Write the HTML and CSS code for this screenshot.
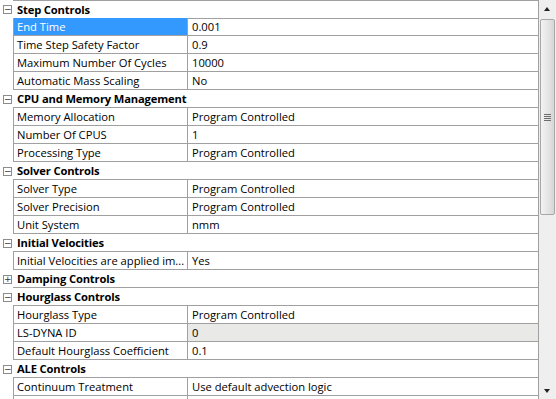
FILE: index.html
```html
<!DOCTYPE html>
<html>
<head>
<meta charset="utf-8">
<link rel="stylesheet" href="styles.css">
</head>
<body>
<div class="panel">
  <div class="grid">
    <div class="row cat"><span class="tog">&minus;</span><div class="ctext">Step Controls</div></div>
    <div class="row prop sel"><span class="gut"></span><div class="name">End Time</div><div class="val">0.001</div></div>
    <div class="row prop"><span class="gut"></span><div class="name">Time Step Safety Factor</div><div class="val">0.9</div></div>
    <div class="row prop"><span class="gut"></span><div class="name">Maximum Number Of Cycles</div><div class="val">10000</div></div>
    <div class="row prop"><span class="gut"></span><div class="name">Automatic Mass Scaling</div><div class="val">No</div></div>
    <div class="row cat"><span class="tog">&minus;</span><div class="ctext">CPU and Memory Management</div></div>
    <div class="row prop"><span class="gut"></span><div class="name">Memory Allocation</div><div class="val">Program Controlled</div></div>
    <div class="row prop"><span class="gut"></span><div class="name">Number Of CPUS</div><div class="val">1</div></div>
    <div class="row prop"><span class="gut"></span><div class="name">Processing Type</div><div class="val">Program Controlled</div></div>
    <div class="row cat"><span class="tog">&minus;</span><div class="ctext">Solver Controls</div></div>
    <div class="row prop"><span class="gut"></span><div class="name">Solver Type</div><div class="val">Program Controlled</div></div>
    <div class="row prop"><span class="gut"></span><div class="name">Solver Precision</div><div class="val">Program Controlled</div></div>
    <div class="row prop"><span class="gut"></span><div class="name">Unit System</div><div class="val">nmm</div></div>
    <div class="row cat"><span class="tog">&minus;</span><div class="ctext">Initial Velocities</div></div>
    <div class="row prop"><span class="gut"></span><div class="name">Initial Velocities are applied im...</div><div class="val">Yes</div></div>
    <div class="row cat"><span class="tog">+</span><div class="ctext">Damping Controls</div></div>
    <div class="row cat"><span class="tog">&minus;</span><div class="ctext">Hourglass Controls</div></div>
    <div class="row prop"><span class="gut"></span><div class="name">Hourglass Type</div><div class="val">Program Controlled</div></div>
    <div class="row prop"><span class="gut"></span><div class="name">LS-DYNA ID</div><div class="val ro">0</div></div>
    <div class="row prop"><span class="gut"></span><div class="name">Default Hourglass Coefficient</div><div class="val">0.1</div></div>
    <div class="row cat"><span class="tog">&minus;</span><div class="ctext">ALE Controls</div></div>
    <div class="row prop"><span class="gut"></span><div class="name">Continuum Treatment</div><div class="val">Use default advection logic</div></div>
    <div class="row prop"><span class="gut"></span><div class="name">&nbsp;</div><div class="val">&nbsp;</div></div>
  </div>
  <div class="sbar">
    <div class="arrow up"></div>
    <div class="track">
      <div class="thumb"><div class="grip"></div></div>
    </div>
    <div class="arrow down"></div>
  </div>
</div>
</body>
</html>
```
FILE: styles.css
```css
html, body {
  margin: 0;
  padding: 0;
  background: #ffffff;
}
body {
  width: 556px;
  height: 399px;
  overflow: hidden;
  font-family: "Open Sans", "Noto Sans", sans-serif;
  font-size: 11.2px;
  color: #000;
}
.panel {
  display: flex;
  width: 556px;
  height: 399px;
  overflow: hidden;
}
.grid {
  width: 539px;
  height: 399px;
  overflow: hidden;
}
.row {
  display: grid;
  grid-template-columns: 13px 174px 1fr;
  height: 18px;
}
.row:first-child .ctext {
  border-top: 1px solid #a0a0a0;
}
.gut {
  display: block;
}
.tog {
  width: 7px;
  height: 7px;
  border: 1px solid #8c8c8c;
  margin: 5px 0 0 3px;
  font-size: 9px;
  line-height: 7px;
  text-align: center;
  color: #333;
  font-family: "DejaVu Sans", sans-serif;
  overflow: hidden;
}
.ctext {
  grid-column: 2 / 4;
  font-weight: bold;
  letter-spacing: -0.15px;
  padding-left: 4px;
  line-height: 17px;
  border-bottom: 1px solid #a0a0a0;
  border-right: 1px solid #a0a0a0;
  white-space: nowrap;
  box-sizing: border-box;
}
.name, .val {
  border-left: 1px solid #a0a0a0;
  border-bottom: 1px solid #a0a0a0;
  line-height: 17px;
  white-space: nowrap;
  overflow: hidden;
}
.name {
  padding-left: 3px;
}
.val {
  padding-left: 4px;
  border-right: 1px solid #a0a0a0;
}
.sel .name {
  background: #3399ff;
  color: #fff;
}
.val.ro {
  background: #e9e9e7;
}
.sbar {
  width: 17px;
  height: 399px;
  background: #efefef;
  display: flex;
  flex-direction: column;
}
.arrow {
  height: 17px;
  position: relative;
}
.arrow::after {
  content: "";
  position: absolute;
  left: 5px;
  width: 0;
  height: 0;
  border-left: 3px solid transparent;
  border-right: 3px solid transparent;
}
.up::after {
  top: 7px;
  border-bottom: 4px solid #222;
}
.down::after {
  top: 7px;
  border-top: 4px solid #222;
}
.track {
  flex: 1;
  padding-top: 2px;
}
.thumb {
  margin: 0 1px 0 1px;
  height: 196px;
  border: 1px solid #a7a7a7;
  border-radius: 2px;
  background: linear-gradient(to right, #f3f3f3, #e6e6e6 50%, #d6d6d6);
  box-sizing: border-box;
  display: flex;
  align-items: center;
  justify-content: center;
}
.grip {
  width: 7px;
  height: 7px;
  background: repeating-linear-gradient(to bottom, #6d6d6d 0 1px, transparent 1px 2px);
}
```
